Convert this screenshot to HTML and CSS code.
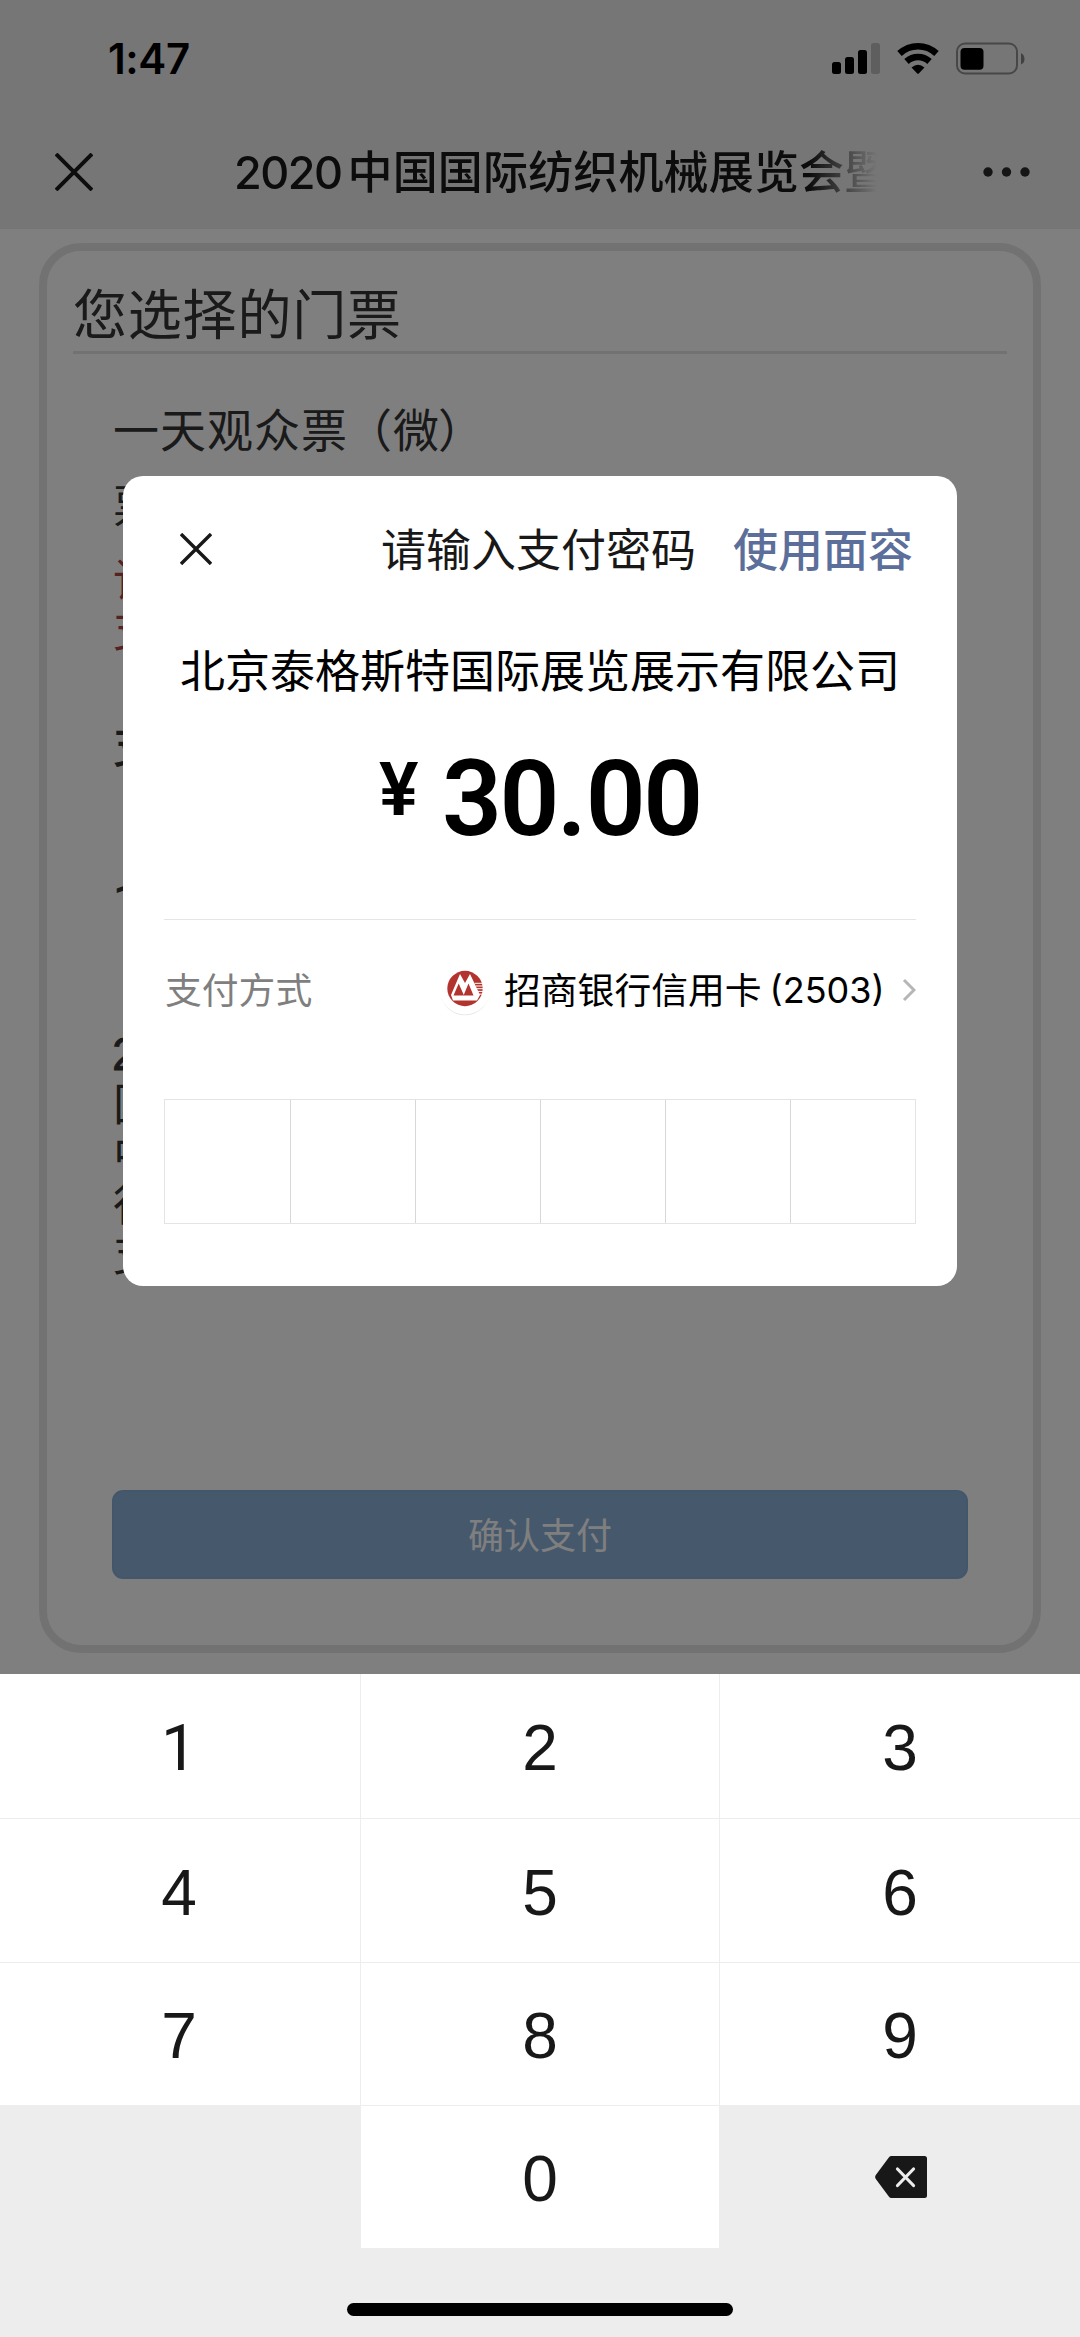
FILE: index.html
```html
<!DOCTYPE html>
<html lang="zh-CN">
<head>
<meta charset="utf-8">
<title>支付</title>
<link rel="stylesheet" href="styles.css">
</head>
<body>
<div class="screen">
  <div class="page">
    <header class="header">
      <div class="status">
        <span class="time">1:47</span>
        <svg class="status-icons" width="194" height="34" viewBox="831 42 194 34">
          <rect x="832" y="62" width="9" height="12" rx="2.5"/>
          <rect x="845" y="57" width="9" height="17" rx="2.5"/>
          <rect x="858" y="50" width="9" height="24" rx="2.5"/>
          <rect x="871" y="43" width="9" height="31" rx="2.5" fill-opacity=".2"/>
          <g fill="none" stroke="#000" stroke-width="6.6">
            <path d="M899.5 53.5Q907.500 46.200 918 46.200T936.500 53.500"/>
            <path d="M906.500 61.500Q911.500 57 918 57T929.500 61.500"/>
          </g>
          <path d="M911.500 67.500Q918 62.200 924.500 67.500L919 73.300Q918 74.300 917 73.300Z"/>
          <rect x="957" y="43.500" width="60" height="30" rx="8" fill="none" stroke="#000" stroke-opacity=".4" stroke-width="2"/>
          <rect x="960.500" y="48" width="23" height="21.700" rx="4"/>
          <path d="M1021 53Q1024.500 55 1024.500 59T1021 64.500Z" fill-opacity=".45"/>
        </svg>
      </div>
      <div class="nav">
        <svg class="nav-close" width="38" height="38" viewBox="0 0 38 38"><path d="M1 1L37 37M37 1L1 37"/></svg>
        <div class="nav-title"><span class="nav-year">2020</span>中国国际纺织机械展览会暨</div>
        <svg class="nav-more" width="48" height="10" viewBox="0 0 48 10"><circle cx="5" cy="5" r="4.700"/><circle cx="23.500" cy="5" r="4.700"/><circle cx="42" cy="5" r="4.700"/></svg>
      </div>
    </header>
    <main class="ticket">
      <h1 class="ticket-heading">您选择的门票</h1>
      <div class="ticket-body">
        <p class="line name">一天观众票<span class="paren">（</span>微<span class="paren-end">）</span></p>
        <p class="line count">票</p>
        <p class="line warn">请</p>
        <p class="line warn">支</p>
        <p class="line pay">支</p>
        <p class="line qty">1</p>
        <p class="line show">2</p>
        <p class="line">国</p>
        <p class="line">中</p>
        <p class="line">行</p>
        <p class="line">支</p>
        <button class="confirm">确认支付</button>
      </div>
    </main>
    <div class="mask"></div>
    <section class="dialog">
      <div class="dialog-head">
        <svg class="dialog-close" width="32" height="32" viewBox="0 0 32 32"><path d="M1 1L31 31M31 1L1 31"/></svg>
        <span class="dialog-title">请输入支付密码</span>
        <a class="dialog-link">使用面容</a>
      </div>
      <div class="payee">北京泰格斯特国际展览展示有限公司</div>
      <div class="amount"><span class="yen">¥</span><span class="value">30<span class="dot">.</span>00</span></div>
      <div class="method">
        <span class="method-label">支付方式</span>
        <svg class="bank" width="52" height="54" viewBox="0 0 52 54">
          <circle cx="26" cy="27.500" r="24.800" fill="#e6e6e6"/>
          <circle cx="26" cy="26" r="25.500" fill="#fff"/>
          <circle cx="26" cy="25.500" r="17.700" fill="#b3342e"/>
          <path d="M12 32L21 11L26 20L31 11L41 32L38 37.500H14Z" fill="#fff"/>
          <path d="M14.500 32.500L19.700 20.500L25 32.500ZM24.500 32.500L29.500 20.500L34.500 32.500Z" fill="#b3342e"/>
          <path d="M35.500 20.300H44M36.500 23H44M37.500 25.700H44M39 28.400H44M40 31.100H43" stroke="#fff" stroke-width="1"/>
        </svg>
        <span class="bank-name">招商银行信用卡<span class="tail">(2503)</span></span>
        <svg class="chevron" width="14" height="24" viewBox="0 0 14 24"><path d="M2 2L12 12L2 22"/></svg>
      </div>
      <div class="pin"><i></i><i></i><i></i><i></i><i></i><i></i></div>
    </section>
  </div>
  <div class="keypad">
    <div class="keys">
      <div class="key one">1</div><div class="key">2</div><div class="key">3</div>
      <div class="key">4</div><div class="key">5</div><div class="key">6</div>
      <div class="key">7</div><div class="key">8</div><div class="key">9</div>
      <div class="key blank"></div><div class="key">0</div>
      <div class="key blank">
        <svg class="erase" width="52" height="42" viewBox="0 0 52 42"><path d="M16.500 0H49.500Q52 0 52 2.500V39.500Q52 42 49.500 42H16.500Q14.800 42 14 40.700L.8 23Q-.5 21 .8 19L14 1.300Q14.800 0 16.500 0Z" fill="#181818"/><path d="M22.500 13L38.500 29.500M38.500 13L22.500 29.500" stroke="#ededed" stroke-width="3.200" stroke-linecap="round"/></svg>
      </div>
    </div>
    <div class="home"></div>
  </div>
</div>
</body>
</html>
```
FILE: styles.css
```css
* { box-sizing: border-box; }
body { margin: 0; font-family: "Noto Sans CJK SC", sans-serif; }
p, h1 { margin: 0; font-weight: 400; }
svg { display: block; flex: none; }
.screen { width: 1080px; height: 2337px; overflow: hidden; }
.page { position: relative; height: 1674px; background: #fff; overflow: hidden; }

.header { height: 229px; background: #ededed; }
.status { height: 116px; display: flex; justify-content: space-between; padding: 42px 55px 0 108px; }
.time { font: 600 42px/34px Inter, sans-serif; letter-spacing: -0.4px; }
.nav { height: 113px; display: flex; align-items: flex-start; padding: 0 49px 0 55px; }
.nav-close { margin-top: 37px; stroke: #1a1a1a; stroke-width: 4; }
.nav-title {
  width: 643px; margin: 22px 0 0 141px; overflow: hidden; white-space: nowrap;
  font-size: 45px; line-height: 64px; font-weight: 500; letter-spacing: .15px; color: #181818;
  -webkit-mask-image: linear-gradient(90deg, #000 575px, transparent 643px);
  mask-image: linear-gradient(90deg, #000 575px, transparent 643px);
}
.nav-year { font-family: Inter, sans-serif; font-weight: 500; font-size: 45px; letter-spacing: -1.500px; margin-right: 6px; }
.nav-more { margin: 51px 0 0 auto; fill: #2a2a2a; }

.ticket { width: 1002px; height: 1410px; margin: 14px auto 0; border: 8px solid #e5e5e5; border-radius: 42px; padding: 0 26px; }
.ticket-heading { height: 103px; border-bottom: 3px solid #e5e5e5; font-size: 54px; line-height: 122px; letter-spacing: .8px; color: #343434; }
.ticket-body { padding: 0 39px; display: flex; flex-direction: column; }
.line { height: 50px; padding-left: 1px; font-size: 45px; line-height: 50px; color: #343434; white-space: nowrap; }
.name { margin-top: 48px; font-size: 46px; letter-spacing: 1px; }
.paren { margin-left: -2px; }
.paren-end { margin-left: -2px; }
.count { margin-top: 27px; }
.warn { color: #a94442; }
.count + .warn { margin-top: 24px; }
.pay { margin-top: 66px; font-weight: 500; }
.qty { margin-top: 107px; font-family: Roboto, sans-serif; font-weight: 500; }
.show { margin-top: 101px; padding: 2px 0 0; font: 400 47px/50px "Liberation Sans", sans-serif; -webkit-text-stroke: .8px #343434; }
.confirm {
  height: 89px; margin-top: 213px; padding: 0 0 3px; border: 2px solid #88aed4; border-radius: 11px; background: #8cb0d8;
  color: #fff; font: 400 36px/52px "Noto Sans CJK SC", sans-serif;
}
.mask { position: absolute; inset: 0; background: rgba(0, 0, 0, .5); }

.dialog { position: absolute; left: 123px; top: 476px; width: 834px; height: 810px; border-radius: 20px; background: #fff; padding: 0 41px; }
.dialog-head { display: flex; height: 148px; padding: 39px 3px 0 16px; font-size: 45px; line-height: 66px; }
.dialog-close { margin-top: 18px; stroke: #181818; stroke-width: 3.400; }
.dialog-title { margin-left: 169px; color: #181818; white-space: nowrap; }
.dialog-link { margin-left: auto; font-weight: 500; color: #5c6e9a; white-space: nowrap; }
.payee { height: 110px; line-height: 90px; font-size: 45px; text-align: center; white-space: nowrap; }
.amount { height: 186px; display: flex; border-bottom: 1px solid #e5e5e5; font-family: Roboto, sans-serif; font-weight: 600; }
.yen { width: 63px; margin-left: 215px; font-size: 74px; line-height: 111px; }
.value { font-size: 105px; line-height: 132px; letter-spacing: -2.500px; }
.dot { letter-spacing: -1px; }
.method { display: flex; align-items: center; height: 140px; font-size: 36.800px; line-height: 54px; white-space: nowrap; }
.method-label { color: #7f7f7f; width: 274px; margin-left: 1px; padding-bottom: 5px; }
.bank { margin-right: 13px; }
.bank-name { display: flex; padding-bottom: 5px; }
.tail { font-family: Inter, sans-serif; font-size: 36px; margin: 2px 0 -2px 8px; }
.chevron { margin-left: auto; fill: none; stroke: #b6b6b6; stroke-width: 3; }
.pin { display: grid; grid-template-columns: repeat(6, 1fr); height: 125px; margin-top: 39px; border: 1px solid #e4e4e4; }
.pin i + i { border-left: 1px solid #d8d8d8; }

.keypad { height: 663px; background: #ededed; }
.keys { display: grid; grid-template-columns: 360px 358px 360px; grid-template-rows: 144px 143px 142px 142px; column-gap: 1px; row-gap: 1px; }
.key { display: flex; align-items: center; justify-content: center; background: #fff; padding-top: 4px; font: 64px/72px "Liberation Sans", sans-serif; color: #181818; }
.key:nth-child(3n+1) { padding-right: 2px; }
.one { font-family: Roboto, sans-serif; padding-top: 6px; }
.blank { background: #ededed; padding-top: 0; }
.erase { margin-left: 1px; }
.home { width: 386px; height: 13px; margin: 55px auto 0; border-radius: 7px; background: #000; }
```
